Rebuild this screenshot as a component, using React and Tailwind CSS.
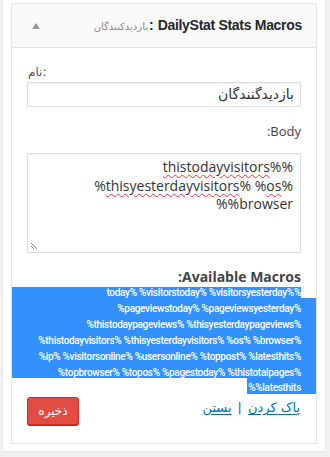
import React from "react";

const macroFont = { fontFamily: 'Roboto, "Open Sans", sans-serif' };
const fa = { fontFamily: '"DejaVu Sans", "Noto Sans", sans-serif' };

export default function App() {
  return (
    <div className="w-[330px] h-[457px] bg-[#f1f1f1] pl-[3px] overflow-hidden" style={{ fontFamily: '"Liberation Sans", "Noto Sans", Arial, sans-serif' }}>
      <div className="w-[322px] h-[451px] bg-white px-[8px] pt-[3px] shadow-[0_1px_2px_rgba(0,0,0,0.06)]">
        <div className="w-[306px] h-[441px] border border-[#e5e5e5] bg-white flex flex-col">
          {/* header */}
          <div className="h-[44px] bg-[#f9f9f9] border-b border-[#e5e5e5] flex items-center pl-[20px] pr-[14px]">
            <svg width="8" height="6" viewBox="0 0 8 6" className="shrink-0">
              <polygon points="4,0 8,6 0,6" fill="#999" />
            </svg>
            <div className="flex-1 flex justify-end items-baseline">
              <span className="text-[10px] text-[#888]" style={fa}>بازدیدکنندگان</span>
              <span className="text-[14px] font-bold text-[#23282d] ml-[1px] mr-[4px]">:</span>
              <span className="text-[14px] font-bold text-[#23282d] tracking-[-0.3px]">DailyStat Stats Macros</span>
            </div>
          </div>

          {/* body */}
          <div className="px-[15px] pt-[14px] flex flex-col">
            <div className="flex text-[12px] text-[#555] leading-[20px] h-[20px] pl-[1px]" style={fa}>
              <span>نام</span>
              <span>:</span>
            </div>
            <div className="h-[25px] border border-[#ddd] shadow-[inset_0_1px_2px_rgba(0,0,0,0.07)] flex items-center justify-end pr-[6px] text-[14px] text-[#333]" style={fa}>
              <span>بازدیدگنندگان</span>
            </div>

            <div className="mt-[15px] text-right text-[13px] text-[#444] leading-[18px] h-[18px]" style={{ fontFamily: '"Open Sans", "Noto Sans", sans-serif' }}>:Body</div>

            <div className="mt-[13px] h-[100px] border border-[#ddd] shadow-[inset_0_1px_2px_rgba(0,0,0,0.07)] pt-[4px] pr-[7px] text-right text-[14px] leading-[18.5px] text-[#333] flex flex-col" style={{ fontFamily: '"Open Sans", "Noto Sans", sans-serif' }}>
              <div>
                <span className="underline decoration-wavy decoration-[#e33] decoration-1 underline-offset-2">thistodayvisitors</span>%%
              </div>
              <div>
                %<span className="underline decoration-wavy decoration-[#e33] decoration-1 underline-offset-2">thisyesterdayvisitors</span>% %<span className="underline decoration-wavy decoration-[#e33] decoration-1 underline-offset-2">os</span>%
              </div>
              <div>%%browser</div>
              <div className="mt-auto mb-[2px] pl-[2px] leading-none">
                <svg width="8" height="8" viewBox="0 0 8 8">
                  <line x1="1" y1="1" x2="7" y2="7" stroke="#888" strokeWidth="1" />
                  <line x1="1" y1="4" x2="4" y2="7" stroke="#888" strokeWidth="1" />
                </svg>
              </div>
            </div>

            <div className="mt-[14px] text-right text-[14px] font-bold text-[#444] leading-[20px] h-[20px]" style={{ fontFamily: '"Open Sans", "Noto Sans", sans-serif' }}>:Available Macros</div>
          </div>

          {/* macros selection */}
          <div className="flex flex-col text-white text-[10px] font-medium tracking-[-0.3px] whitespace-nowrap" style={macroFont}>
            <div className="h-[11px] mr-[15px] bg-[#3390ff] text-right leading-[11px]">today% %visitorstoday% %visitorsyesterday%%</div>
            <div className="h-[16px] bg-[#3390ff] text-right pr-[15px] pt-[3px] leading-[16px]">%pageviewstoday% %pageviewsyesterday%</div>
            <div className="h-[16px] bg-[#3390ff] text-right pr-[15px] pt-[3px] leading-[16px]">%thistodaypageviews% %thisyesterdaypageviews%</div>
            <div className="h-[16px] bg-[#3390ff] text-right pr-[15px] pt-[3px] leading-[16px]">%thistodayvisitors% %thisyesterdayvisitors% %os% %browser%</div>
            <div className="h-[16px] bg-[#3390ff] text-right pr-[15px] pt-[3px] leading-[16px]">%ip% %visitorsonline% %usersonline% %toppost% %latesthits%</div>
            <div className="h-[16px] bg-[#3390ff] text-right pr-[15px] pt-[3px] leading-[16px]">%topbrowser% %topos% %pagestoday% %thistotalpages%</div>
            <div className="flex justify-end">
              <div className="h-[16px] bg-[#3390ff] pl-[1px] pr-[15px] pt-[2px] leading-[16px]">%%latesthits</div>
            </div>
          </div>

          {/* footer */}
          <div className="px-[15px] mt-[3px] flex justify-between items-start">
            <button className="w-[52px] h-[28px] bg-[#e14d43] border border-[#d02c21] rounded-[3px] text-white text-[12px] shadow-[0_1px_0_#ba281e]" style={fa}>ذخیره</button>
            <div className="flex items-center text-[13px] text-[#0073aa] pt-[1px] pr-[1px]" style={fa}>
              <span className="underline underline-offset-2">بستن</span>
              <span className="text-[#555] mx-[6px]">|</span>
              <span className="underline underline-offset-2">پاک کردن</span>
            </div>
          </div>
        </div>
      </div>
    </div>
  );
}
